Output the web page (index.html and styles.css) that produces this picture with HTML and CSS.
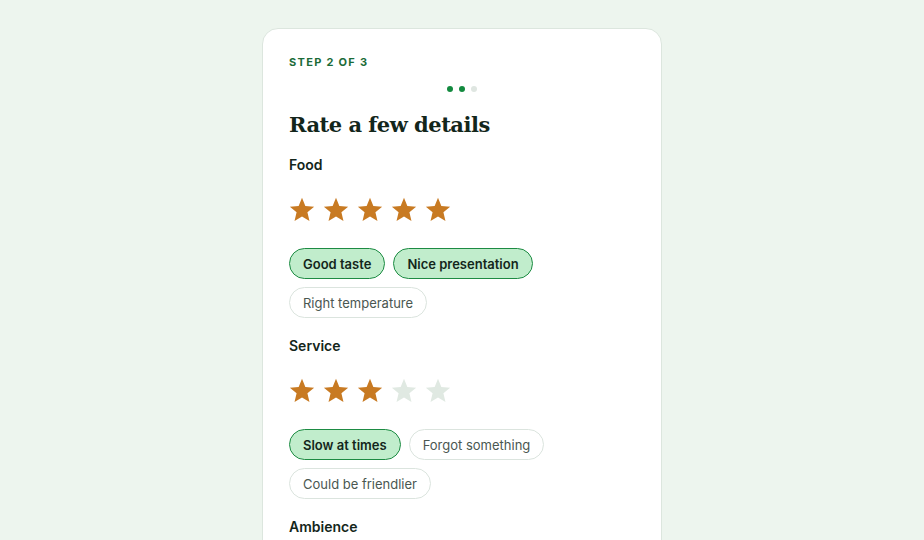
FILE: index.html
```html
<!DOCTYPE html>
<html lang="en">
  <head>
    <meta charset="utf-8">
    <title>Rate a few details</title>
    <link rel="stylesheet" href="styles.css">
  </head>
  <body>
    <svg width="0" height="0" class="defs">
      <defs>
        <symbol id="star" viewBox="0 0 24 24">
          <polygon points="12,0.8 15.1,8.3 23.2,8.9 17,14.1 18.9,22.2 12,17.9 5.1,22.2 7,14.1 0.8,8.9 8.9,8.3"/>
        </symbol>
      </defs>
    </svg>

    <div class="card">
      <p class="step">Step 2 of 3</p>
      <div class="dots">
        <span class="dot dot--on"></span>
        <span class="dot dot--on"></span>
        <span class="dot"></span>
      </div>
      <h1>Rate a few details</h1>

      <section class="group">
        <h2>Food</h2>
        <div class="stars">
          <svg class="star star--on"><use href="#star"/></svg>
          <svg class="star star--on"><use href="#star"/></svg>
          <svg class="star star--on"><use href="#star"/></svg>
          <svg class="star star--on"><use href="#star"/></svg>
          <svg class="star star--on"><use href="#star"/></svg>
        </div>
        <div class="chips">
          <span class="chip chip--on">Good taste</span>
          <span class="chip chip--on">Nice presentation</span>
          <span class="chip">Right temperature</span>
        </div>
      </section>

      <section class="group">
        <h2>Service</h2>
        <div class="stars">
          <svg class="star star--on"><use href="#star"/></svg>
          <svg class="star star--on"><use href="#star"/></svg>
          <svg class="star star--on"><use href="#star"/></svg>
          <svg class="star"><use href="#star"/></svg>
          <svg class="star"><use href="#star"/></svg>
        </div>
        <div class="chips">
          <span class="chip chip--on">Slow at times</span>
          <span class="chip">Forgot something</span>
          <span class="chip">Could be friendlier</span>
        </div>
      </section>

      <section class="group">
        <h2>Ambience</h2>
      </section>
    </div>
  </body>
</html>
```

FILE: styles.css
```css
html, body {
  margin: 0;
  padding: 0;
}

body {
  min-height: 100vh;
  background-color: #edf5ee;
  font-family: Inter, "Noto Sans", sans-serif;
  color: #14261b;
}

.defs {
  position: absolute;
}

.card {
  width: 346px;
  margin: 28px auto 0;
  padding: 26px 26px 40px;
  background-color: #fff;
  border: 1px solid #dce6de;
  border-radius: 16px;
}

.step {
  margin: 0;
  font-size: 11px;
  line-height: 14px;
  font-weight: 700;
  letter-spacing: 1.3px;
  text-transform: uppercase;
  color: #1b6b38;
}

.dots {
  display: flex;
  justify-content: center;
  gap: 6px;
  margin-top: 17px;
}

.dot {
  width: 6px;
  height: 6px;
  border-radius: 50%;
  background-color: #dfe6e1;
}

.dot--on {
  background-color: #138a3f;
}

h1 {
  margin: 18px 0 0;
  font-family: "DejaVu Serif", serif;
  font-size: 21px;
  line-height: 30px;
  font-weight: 700;
  letter-spacing: -0.5px;
  color: #13261b;
}

.group {
  margin-top: 15px;
}

.group + .group {
  margin-top: 18px;
}

h2 {
  margin: 0;
  font-size: 14px;
  line-height: 20px;
  font-weight: 600;
}

.stars {
  display: flex;
  gap: 8px;
  margin-top: 22px;
}

.star {
  width: 26px;
  height: 26px;
  fill: #e0e9e2;
}

.star--on {
  fill: #c87a22;
}

.chips {
  display: flex;
  flex-wrap: wrap;
  gap: 8px;
  margin-top: 25px;
}

.chip {
  box-sizing: border-box;
  height: 31px;
  padding: 0 13px;
  display: flex;
  align-items: center;
  font-size: 13px;
  color: #4a5751;
  background-color: #fff;
  border: 1px solid #dbe4de;
  border-radius: 16px;
}

.chip--on {
  font-weight: 600;
  color: #13261b;
  background-color: #c1edcc;
  border-color: #1d8b43;
}
```
